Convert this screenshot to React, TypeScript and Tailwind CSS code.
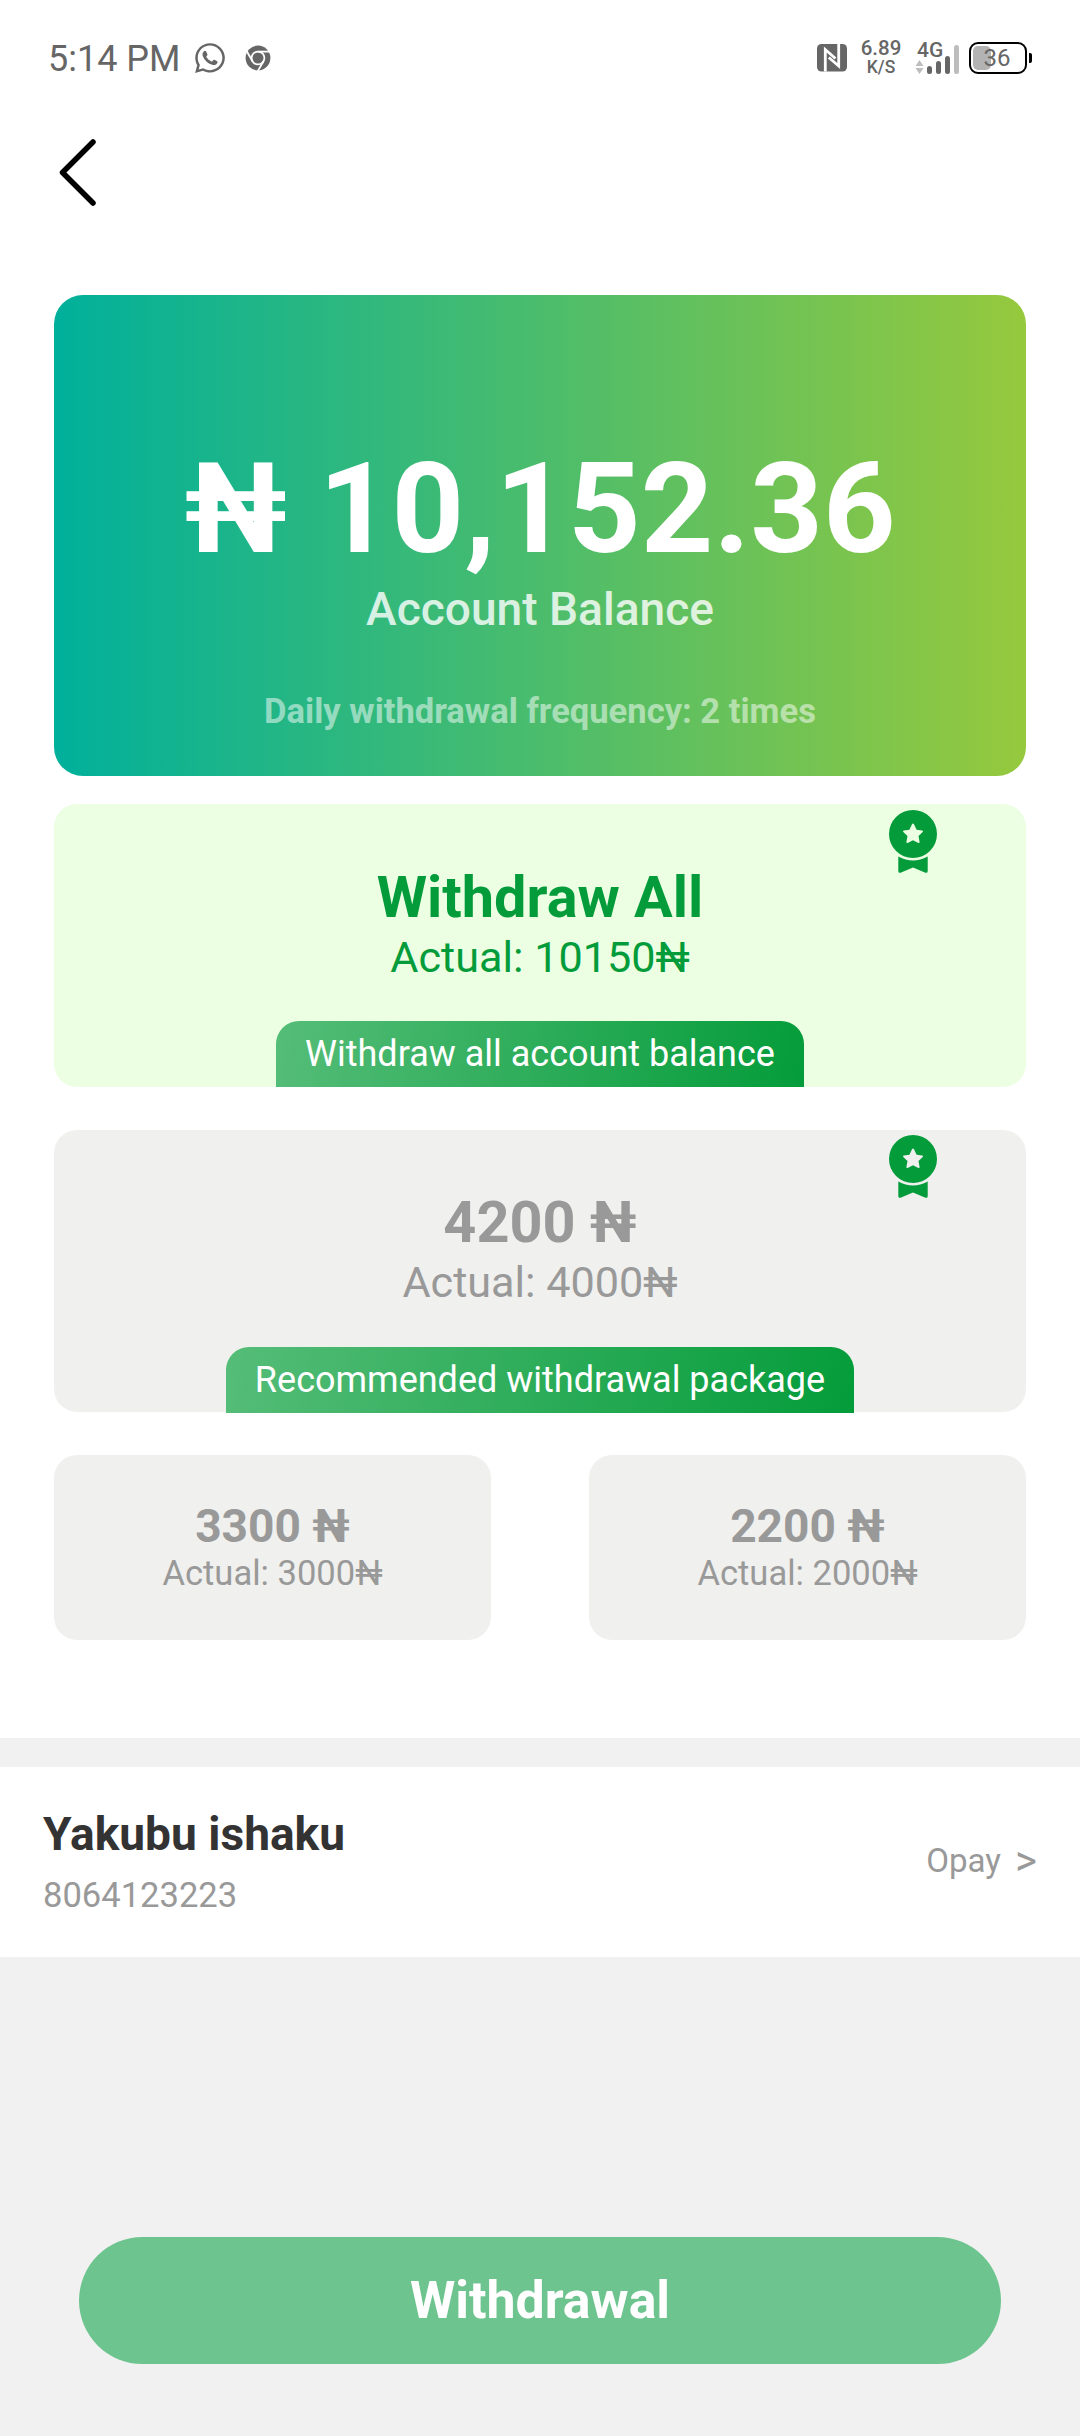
import { FaWhatsapp } from "react-icons/fa";

const packages = [
  { amount: "3300 ₦", actual: "Actual: 3000₦" },
  { amount: "2200 ₦", actual: "Actual: 2000₦" },
];

const ChromeIcon = () => (
  <svg className="h-[26px] w-[26px]" viewBox="0 0 26 26" fill="none">
    <circle cx="13" cy="13" r="12.4" fill="#666" />
    <circle cx="13" cy="13" r="6.4" fill="#666" stroke="#fff" strokeWidth="1.8" />
    <g stroke="#fff" strokeWidth="1.8">
      <path d="M13 6.6H25" />
      <path d="M18.5 16.2L12.6 26.4" />
      <path d="M7.5 16.2L1.6 6" />
    </g>
  </svg>
);

const NfcIcon = () => (
  <svg className="h-[28px] w-[30px]" viewBox="0 0 30 28" fill="none">
    <rect width="30" height="27.5" rx="4.5" fill="#666" />
    <path d="M8.3 27.5V5.5L18.5 14.5" stroke="#fff" strokeWidth="2.8" />
    <path d="M21.7 0V22L11.8 13.5" stroke="#fff" strokeWidth="2.8" />
  </svg>
);

const SignalIcon = () => (
  <svg className="h-[32px] w-[46px]" viewBox="0 0 46 32">
    <path d="M4.5 16L8.5 22H.5zM4.5 30L8.5 24H.5z" fill="#bdbdbd" />
    <rect x="12" y="22" width="5" height="8" rx="2.5" fill="#666" />
    <rect x="21" y="17" width="5" height="13" rx="2.5" fill="#666" />
    <rect x="30" y="12" width="5" height="18" rx="2.5" fill="#666" />
    <rect x="39" y="1" width="5" height="29" rx="2.5" fill="#bdbdbd" />
  </svg>
);

const Medal = () => (
  <svg className="h-[64px] w-[48px]" viewBox="0 0 48 64" fill="#049c3a">
    <path
      fillRule="evenodd"
      d="M24 0a24 24 0 1 1 0 48a24 24 0 1 1 0-48zM23 14.2l-2.6 5.6-5.6.7q-1.4.4-.5 1.4l4.2 4.1-1.1 6q0 1.4 1.2.9l5.4-2.7 5.4 2.7q1.2.5 1.2-.9l-1.1-6 4.2-4.1q.9-1-.5-1.4l-5.6-.7-2.6-5.6q-1-1.5-2 0z"
    />
    <path d="M9.3 46.5Q24 54.5 38.7 46.5V61.3Q38.5 63.3 36.5 62.7L24 57.5 11.5 62.7Q9.5 63.3 9.3 61.3z" />
  </svg>
);

const StatusBar = () => (
  <div className="flex h-[118px] items-start justify-between pl-[48px] pr-[48px] text-[#666]">
    <div className="flex items-start">
      <span className="mt-[38px] w-[145px] text-[36px] leading-[43px]">5:14 PM</span>
      <FaWhatsapp className="mt-[41px] h-[34px] w-[34px]" />
      <div className="ml-[18px] mt-[45px]">
        <ChromeIcon />
      </div>
    </div>
    <div className="flex items-start">
      <div className="mt-[44px]">
        <NfcIcon />
      </div>
      <div className="ml-[14px] mt-[38px] flex w-[40px] flex-col items-center font-medium">
        <span className="text-[20.5px] leading-[20px]">6.89</span>
        <span className="mt-px text-[17.5px] leading-[17px]">K/S</span>
      </div>
      <div className="relative ml-[14px] mt-[44px]">
        <SignalIcon />
        <span className="absolute -top-[4px] left-[2px] text-[21px] font-medium leading-[21px]">4G</span>
      </div>
      <div className="ml-[8px] mt-[42px] flex items-center">
        <div className="relative flex h-[32px] w-[58px] items-center justify-center rounded-[9px] border-2 border-black">
          <div className="absolute left-[2px] top-[2px] h-[24px] w-[18px] rounded-[5px] bg-[#b3b3b3]" />
          <span className="relative -left-px text-[24px] leading-[26px]">36</span>
        </div>
        <div className="ml-[2px] h-[10px] w-[3px] rounded-r-[2px] bg-black" />
      </div>
    </div>
  </div>
);

export default function App() {
  return (
    <div className="flex h-[2436px] w-[1080px] flex-col bg-[#f1f1f1] font-['Roboto',sans-serif]">
      <div className="h-[1738px] bg-white">
        <StatusBar />
        <svg className="ml-[54px] mt-[16px] h-[77px] w-[50px]" viewBox="0 0 50 77" fill="none">
          <path d="M39 8L8.5 38.5L39 69" stroke="#000" strokeWidth="5.5" strokeLinecap="round" strokeLinejoin="round" />
        </svg>

        <div className="mx-[54px] mt-[84px] flex h-[481px] flex-col items-center rounded-[29px] bg-[linear-gradient(90deg,#00b09b,#96c93d)] pt-[140px] text-white">
          <div className="text-[126.72px] font-bold leading-[148px]">₦ 10,152.36</div>
          <div className="text-[46.08px] font-medium leading-[52px] opacity-80">Account Balance</div>
          <div className="mt-[56px] text-[34.56px] font-bold leading-[40px] opacity-50">
            Daily withdrawal frequency: 2 times
          </div>
        </div>

        <div className="relative mx-[54px] mt-[28px] flex h-[283px] flex-col items-center rounded-[23px] bg-[#ecffe3] pt-[60px] text-[#049c3a]">
          <div className="absolute right-[89px] top-[6px]">
            <Medal />
          </div>
          <div className="text-[57.6px] font-bold leading-[68px]">Withdraw All</div>
          <div className="mt-px text-[43.2px] leading-[50px]">Actual: 10150₦</div>
          <div className="mt-auto rounded-t-[23px] bg-[linear-gradient(100deg,#55bd78,#049c3a)] px-[29px] text-[36px] leading-[66px] text-white">
            Withdraw all account balance
          </div>
        </div>

        <div className="relative mx-[54px] mt-[43px] flex h-[282px] flex-col items-center rounded-[23px] bg-[#f0f0ee] pt-[59px] text-[#999]">
          <div className="absolute right-[89px] top-[5px]">
            <Medal />
          </div>
          <div className="text-[57.6px] font-bold leading-[68px]">4200 ₦</div>
          <div className="mt-px text-[43.2px] leading-[50px]">Actual: 4000₦</div>
          <div className="-mb-px mt-auto rounded-t-[23px] bg-[linear-gradient(100deg,#55bd78,#049c3a)] px-[29px] text-[36px] leading-[66px] text-white">
            Recommended withdrawal package
          </div>
        </div>

        <div className="mx-[54px] mt-[43px] flex justify-between">
          {packages.map((item) => (
            <div
              key={item.amount}
              className="flex h-[185px] w-[437px] flex-col items-center rounded-[23px] bg-[#f0f0ee] pt-[44px] text-[#999]"
            >
              <div className="text-[46.08px] font-bold leading-[54px]">{item.amount}</div>
              <div className="text-[34.56px] leading-[40px]">{item.actual}</div>
            </div>
          ))}
        </div>
      </div>

      <div className="mt-[29px] flex h-[190px] justify-between bg-white px-[43px]">
        <div className="flex flex-col pt-[40px]">
          <span className="text-[46.08px] font-bold leading-[54px] text-[#333]">Yakubu ishaku</span>
          <span className="mt-[14px] text-[34.56px] leading-[40px] text-[#999]">8064123223</span>
        </div>
        <div className="flex items-center pb-[2px] leading-[40px] text-[#999]">
          <span className="text-[33.12px]">Opay</span>
          <span className="ml-[14px] text-[42px]">&gt;</span>
        </div>
      </div>

      <button className="mx-[79px] mt-[280px] h-[127px] rounded-full bg-[#6dc48f] text-[51.84px] font-bold text-white">
        Withdrawal
      </button>
    </div>
  );
}
